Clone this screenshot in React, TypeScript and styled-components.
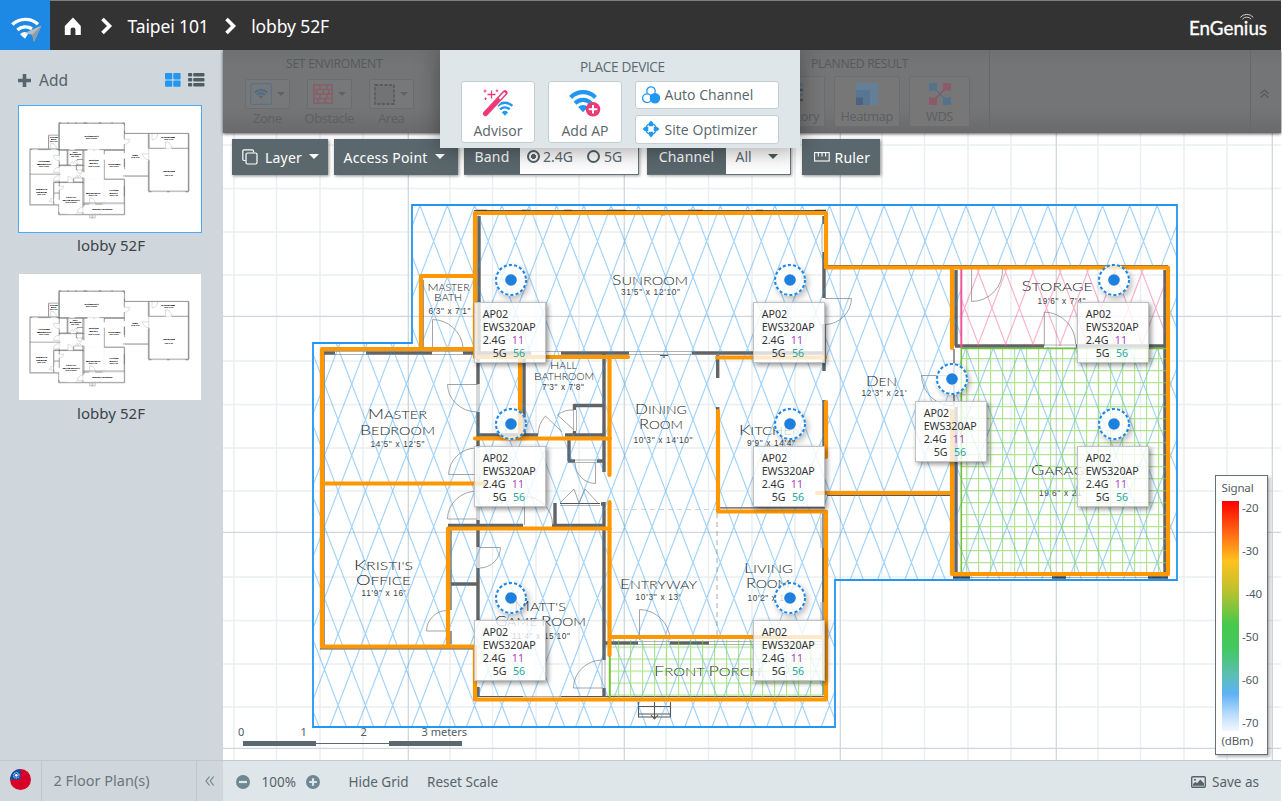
import React from 'react';
import styled, { createGlobalStyle } from 'styled-components';

const UI = "'Noto Sans', 'Open Sans', sans-serif";
const NARROW = "'Open Sans', 'Noto Sans', sans-serif";

const Global = createGlobalStyle`
  * { box-sizing: border-box; }
  html, body, #root { margin: 0; padding: 0; }
  body { background: #fff; font-family: ${UI}; overflow: hidden; }
  svg { display: block; }
`;

/* ---------- shell ---------- */

const Shell = styled.div`
  width: 1282px;
  height: 802px;
  display: flex;
  flex-direction: column;
  overflow: hidden;
  background: #fff;
`;
const Header = styled.header`
  position: relative;
  z-index: 5;
  flex: none;
  width: 1281px;
  height: 50px;
  display: flex;
  align-items: center;
  background: #333;
  border-top: 1px solid #7b7e7f;
`;
const LogoTile = styled.div`
  width: 50px;
  height: 50px;
  margin-top: -1px;
  background: #1e88e5;
`;
const Crumbs = styled.nav`
  display: flex;
  align-items: center;
  padding-left: 14px;
  color: #fff;
`;
const HomeLink = styled.span`
  margin-right: 18.5px;
`;
const Crumb = styled.span<{ $ml: number; $mr?: number }>`
  font-size: 17.5px;
  line-height: 24px;
  white-space: nowrap;
  letter-spacing: -0.12px;
  margin-left: ${(p) => p.$ml}px;
  margin-right: ${(p) => p.$mr ?? 0}px;
`;
const Brand = styled.div`
  margin-left: auto;
  margin-right: 12px;
`;
const Body = styled.div`
  flex: none;
  display: flex;
  width: 1281px;
  height: 751px;
`;

/* ---------- sidebar ---------- */

const Sidebar = styled.aside`
  flex: none;
  width: 223px;
  display: flex;
  flex-direction: column;
  background: #cfd7dd;
`;
const SideTools = styled.div`
  display: flex;
  align-items: center;
  height: 55px;
  padding: 5px 18px 0 18px;
`;
const AddLabel = styled.span`
  margin-left: 8px;
  font-size: 15.5px;
  color: #566167;
`;
const ViewIcons = styled.div`
  margin-left: auto;
  display: flex;
  gap: 7.5px;
`;
const Thumb = styled.div<{ $active?: boolean }>`
  flex: none;
  width: 184px;
  height: 128px;
  margin-left: 18px;
  background: #fff;
  border: ${(p) => (p.$active ? '1.5px solid #4ea9f5' : '1.5px solid #cfd7dd')};
`;
const ThumbLabel = styled.div`
  width: 222px;
  height: 39.5px;
  line-height: 24px;
  font-size: 15px;
  letter-spacing: 0.05px;
  text-align: center;
  color: #3b4347;
`;
const SideFooter = styled.div`
  margin-top: auto;
  height: 41px;
  display: flex;
  border-top: 1.5px solid #bfc9cd;
`;
const SideCell = styled.div<{ $w: number; $last?: boolean }>`
  width: ${(p) => p.$w}px;
  display: flex;
  align-items: center;
  justify-content: center;
  border-right: ${(p) => (p.$last ? 'none' : '1.5px solid #bdc7cc')};
`;
const PlanCount = styled.span`
  width: 131px;
  padding-bottom: 2px;
  font-size: 14.5px;
  letter-spacing: 0.02px;
  color: #6a777c;
`;

/* ---------- ribbon ---------- */

const Main = styled.main`
  flex: 1;
  display: flex;
  flex-direction: column;
  min-width: 0;
`;
const Ribbon = styled.section`
  position: relative;
  z-index: 3;
  flex: none;
  height: 83px;
  display: flex;
  background: linear-gradient(#6f7072, #747577 20%, #747577 70%, #6a6a6c 100%);
  box-shadow: 0 1px 3px rgba(0, 0, 0, 0.65);
`;
const RibbonGroup = styled.div<{ $w: number; $line?: boolean }>`
  width: ${(p) => p.$w}px;
  border-right: ${(p) => (p.$line ? '1px solid #66686a' : 'none')};
`;
const GroupTitle = styled.div<{ $pl: number }>`
  height: 26px;
  padding-left: ${(p) => p.$pl}px;
  padding-top: 4px;
  font-family: ${NARROW};
  font-size: 12.2px;
  letter-spacing: -0.3px;
  line-height: 19px;
  color: #555a5c;
  white-space: nowrap;
`;
const EnvRow = styled.div`
  display: flex;
  gap: 16.5px;
  padding: 3px 0 0 21.5px;
`;
const EnvItem = styled.div`
  width: 45.5px;
  display: flex;
  flex-direction: column;
  align-items: center;
`;
const EnvButton = styled.div`
  width: 45.5px;
  height: 30px;
  display: flex;
  align-items: center;
  justify-content: center;
  gap: 5px;
  border: 1px solid #6c6d6f;
  border-radius: 2px;
  background: #777879;
`;
const DimLabel = styled.div`
  font-family: ${NARROW};
  font-size: 12.8px;
  letter-spacing: -0.35px;
  line-height: 18px;
  white-space: nowrap;
  color: #5b5f61;
`;
const ResultRow = styled.div`
  display: flex;
  gap: 9.5px;
  margin-left: -40px;
`;
const ResultButton = styled.div<{ $w: number }>`
  width: ${(p) => p.$w}px;
  height: 50.5px;
  display: flex;
  flex-direction: column;
  align-items: center;
  padding-top: 6px;
  gap: 2px;
  border: 1px solid #6c6d6f;
  border-radius: 2px;
  background: #777778;
`;
const Collapse = styled.div`
  margin-left: auto;
  width: 31px;
  display: flex;
  align-items: center;
  justify-content: center;
  padding-right: 4px;
  padding-top: 4px;
  border-left: 1px solid #66686a;
`;

/* ---------- place device panel ---------- */

const PlacePanel = styled.div`
  position: relative;
  z-index: 2;
  width: 360px;
  height: 98px;
  background: #dfe6e9;
  box-shadow: 0 2px 22px rgba(0, 0, 0, 0.38);
`;
const PlaceTitle = styled.div`
  height: 30.5px;
  padding: 7px 0 0 140px;
  font-family: ${NARROW};
  font-size: 13.6px;
  letter-spacing: -0.35px;
  line-height: 19px;
  color: #5d696e;
`;
const PlaceRow = styled.div`
  display: flex;
  padding-left: 21px;
  gap: 13px;
`;
const BigButton = styled.div`
  width: 74px;
  height: 62.5px;
  display: flex;
  flex-direction: column;
  align-items: center;
  justify-content: space-between;
  padding: 7px 0 2px;
  border: 1.5px solid #c3ced4;
  border-radius: 3px;
  background: #fff;
`;
const ButtonText = styled.span`
  font-family: ${NARROW};
  font-size: 14px;
  font-weight: 500;
  letter-spacing: 0.05px;
  line-height: 19px;
  color: #58656a;
  white-space: nowrap;
`;
const SmallStack = styled.div`
  display: flex;
  flex-direction: column;
  gap: 6px;
`;
const SmallButton = styled.div`
  width: 143.5px;
  height: 28.5px;
  display: flex;
  align-items: center;
  gap: 5px;
  padding: 0 0 0 5.5px;
  border: 1.5px solid #c3ced4;
  border-radius: 3px;
  background: #fff;
`;

/* ---------- canvas ---------- */

const Canvas = styled.section`
  position: relative;
  flex: 1;
  overflow: hidden;
  background: #fff;
`;
const MapTools = styled.div`
  position: absolute;
  left: 9px;
  top: 5.5px;
  display: flex;
`;
const Tool = styled.div<{ $w: number; $mr: number; $pl: number; $gap: number }>`
  width: ${(p) => p.$w}px;
  height: 36px;
  margin-right: ${(p) => p.$mr}px;
  padding-left: ${(p) => p.$pl}px;
  display: flex;
  align-items: center;
  gap: ${(p) => p.$gap}px;
  background: #5a686e;
  box-shadow: 1px 1px 3px rgba(0, 0, 0, 0.45);
`;
const ToolText = styled.span`
  font-size: 14px;
  line-height: 20px;
  padding-top: 2px;
  letter-spacing: 0.2px;
  color: #fff;
  white-space: nowrap;
`;
const Field = styled.div<{ $w: number; $mr: number }>`
  width: ${(p) => p.$w}px;
  height: 36px;
  margin-right: ${(p) => p.$mr}px;
  display: flex;
  background: #fff;
  border-right: 1.5px solid #66747a;
  border-bottom: 1.5px solid #66747a;
  box-shadow: 1px 1px 3px rgba(0, 0, 0, 0.35);
`;
const FieldName = styled.div<{ $w: number }>`
  width: ${(p) => p.$w}px;
  display: flex;
  align-items: center;
  justify-content: center;
  background: #5a686e;
`;
const FieldValue = styled.div`
  flex: 1;
  display: flex;
  align-items: center;
  padding-left: 6.5px;
  color: #5c6a70;
`;
const Radio = styled.i<{ $on?: boolean }>`
  width: 13px;
  height: 13px;
  border-radius: 50%;
  border: 2.2px solid #55636a;
  background: ${(p) => (p.$on ? 'radial-gradient(#55636a 2.2px, #fff 2.8px)' : '#fff')};
`;
const ValueText = styled.span<{ $ml: number; $mr: number }>`
  margin-left: ${(p) => p.$ml}px;
  margin-right: ${(p) => p.$mr}px;
  padding-top: 2px;
  font-size: 14px;
  letter-spacing: 0;
  line-height: 20px;
`;
const Pin = styled.div`
  position: absolute;
  width: 32px;
  height: 32px;
  border-radius: 50%;
  background: rgba(255, 255, 255, 0.75);
  box-shadow: 2px 3px 6px rgba(0, 0, 0, 0.28);
`;
const Tag = styled.div`
  position: absolute;
  left: -20.5px;
  top: 38px;
  width: 72px;
  height: 61px;
  padding: 4.5px 0 0 7.5px;
  border: 1px solid #bfc3c6;
  background: rgba(255, 255, 255, 0.78);
  box-shadow: 2px 2px 5px rgba(0, 0, 0, 0.45);
  font-size: 10.7px;
  line-height: 13px;
  letter-spacing: -0.05px;
  color: #333;
  white-space: nowrap;
`;
const TagLine = styled.div<{ $indent?: boolean }>`
  padding-left: ${(p) => (p.$indent ? 10 : 0)}px;
`;
const Chan = styled.span<{ $c: string }>`
  margin-left: 6.5px;
  color: ${(p) => p.$c};
`;
const Scale = styled.div`
  position: absolute;
  left: 15px;
  top: 592px;
  width: 240px;
`;
const ScaleLabels = styled.div`
  display: grid;
  grid-template-columns: 62.5px 60px 61px auto;
  font-size: 11px;
  line-height: 14px;
  color: #4f5c62;
`;
const ScaleBar = styled.div`
  display: flex;
  align-items: center;
  margin: 1.5px 0 0 4.5px;
`;
const Segment = styled.i<{ $thin?: boolean }>`
  width: 73.3px;
  height: ${(p) => (p.$thin ? 1 : 5)}px;
  background: #5b696f;
`;
const Legend = styled.div`
  position: absolute;
  left: 992px;
  top: 342px;
  width: 53px;
  height: 280px;
  padding: 3px 0 0 5.5px;
  background: #fff;
  border: 1.5px solid #647177;
  box-shadow: 2px 2px 3px rgba(0, 0, 0, 0.3);
  font-size: 11.5px;
  line-height: 18px;
  letter-spacing: -0.15px;
  color: #4f5c62;
`;
const LegendBody = styled.div`
  display: flex;
  margin-top: 3.5px;
`;
const Gradient = styled.div`
  width: 17px;
  height: 230px;
  background: linear-gradient(#ff0000, #ff5a12 12%, #ffc21e 26%, #c3c02d 38%, #45c94c 54%, #45c761 64%, #5abfae 75%, #60b2f6 84%, #bcddfb 93%, #f2f8fe);
`;
const Ticks = styled.div`
  display: flex;
  flex-direction: column;
  gap: 25px;
  margin: -1.5px 0 0 3.5px;
`;
const Tick = styled.span<{ $shift?: boolean }>`
  line-height: 18px;
  padding-left: ${(p) => (p.$shift ? 3.5 : 0)}px;
`;
const Footer = styled.footer`
  flex: none;
  height: 41px;
  display: flex;
  align-items: center;
  padding: 2px 22px 0 13px;
  background: #dee6e9;
  border-top: 1.5px solid #bfcbd0;
`;
const FootText = styled.span<{ $ml: number; $mr?: number }>`
  font-size: 13.5px;
  letter-spacing: 0;
  color: #56646a;
  white-space: nowrap;
  margin-left: ${(p) => p.$ml}px;
  margin-right: ${(p) => p.$mr ?? 0}px;
`;
const FootRight = styled.div`
  margin-left: auto;
  display: flex;
  align-items: center;
`;

/* ---------- icons ---------- */

const Caret = ({ color, w = 10 }: { color: string; w?: number }) => (
  <svg width={w} height={w / 2} viewBox="0 0 10 5"><path d="M0 0H10L5 5Z" fill={color} /></svg>
);

const CrumbArrow = () => (
  <svg width="12" height="18" viewBox="0 0 12 18" fill="none" stroke="#fff" strokeWidth="3.6">
    <path d="M1.5 2L8.5 9L1.5 16" />
  </svg>
);

const AppLogo = () => (
  <svg width="50" height="50" viewBox="0 0 50 50" fill="none" stroke="#fff" strokeWidth="3.4">
    <path d="M12.3 24.6A19 19 0 0 1 38 24.2M17.3 30A12.5 12.5 0 0 1 32 28.8" />
    <path d="M25 38.8L20 34.3A7.5 7.5 0 0 1 28.5 33Z" fill="#fff" stroke="none" />
    <path d="M41.5 25.5L34 42L32.2 34.8L24.5 33Z" fill="#b4bcc2" stroke="none" />
    <path d="M41.5 25.5L34 42L32.2 34.8Z" fill="#8e9ba4" stroke="none" />
  </svg>
);

const BrandMark = () => (
  <svg width="80" height="30" viewBox="0 0 80 30">
    <text x="0" y="24" fill="#fff" fontFamily="Lato, sans-serif" fontSize="19.5" fontWeight="400" stroke="#fff" strokeWidth="0.35" textLength="78" lengthAdjust="spacingAndGlyphs">EnGenius</text>
    <g fill="none" stroke="#dcdcdc" strokeWidth="0.9">
      <path d="M51.3 6.4A8.5 8.5 0 0 1 64.3 6.4M53.4 8.2A5.7 5.7 0 0 1 62.2 8.2" />
    </g>
  </svg>
);

/* ---------- floor plan ---------- */

type Seg = [number, number, number, number];

const ORANGE =
  'M475 357V213H826V267.5H1168V574H952V411M475 276H421V349M475 349H322V646.5H475V699.5H826V511.5H718V411' +
  'M475 357H628M717 357.5H825M520 357V437M475 438.5H610M609.5 357V475M609.5 502V655M322 483.5H485' +
  'M448 646V528.5H610M609.5 637H826M826 402V457M817 493H952M952 268V348';

const WALLS: Seg[] = [
  [479, 216, 479, 356], [824, 216, 824, 224], [824, 252, 824, 298], [824, 324, 824, 371], [824, 400, 824, 446],
  [324, 353, 335, 353], [366, 353, 432, 353], [463, 353, 531, 353], [561, 353, 629, 353], [692, 353, 823, 353],
  [717.7, 355, 717.7, 378], [717.7, 407, 717.7, 411], [604, 354, 604, 472], [604, 502, 604, 660], [604, 688, 604, 697],
  [574, 405.5, 604, 405.5], [574.5, 404, 574.5, 410], [574.5, 431, 574.5, 436], [477, 435, 538, 435], [565, 435, 604, 435],
  [569, 437, 569, 461], [568, 461, 575, 461], [597, 461, 604, 461], [524, 358, 524, 435],
  [478, 357, 478, 384], [478, 412, 478, 448], [478, 520, 478, 547], [478, 568, 478, 620], [478, 687, 478, 697],
  [448, 525.5, 523, 525.5], [552, 525.5, 604, 525.5], [555, 503, 555, 526], [601, 504, 604, 504],
  [451, 584, 478, 584], [605, 643, 638, 643], [670, 643, 709, 643],
  [956, 270, 956, 346], [956, 407, 956, 573], [955, 346, 1044, 346], [1076, 346, 1166, 346], [1165, 270, 1165, 573],
  [824, 548, 824, 602],
];

const THIN: Seg[] = [
  [474, 210.5, 826, 210.5], [826, 265.5, 1168, 265.5], [451, 530, 451, 610], [451, 631, 451, 644], [320, 648.8, 475, 648.8],
  [478, 696.5, 523, 696.5], [561, 696.5, 825, 696.5], [720, 507.8, 825, 507.8], [823, 513, 823, 695], [954, 349, 954, 406],
  [560, 503.5, 600, 503.5], [324, 354, 324, 646], [827, 495.3, 952, 495.3], [423, 280, 423, 348],
];

const BLOCKS: Seg[] = [
  [476, 211, 487, 211], [522, 211, 530, 211], [564, 211, 572, 211], [607, 211, 626, 211], [688, 211, 703, 211],
  [756, 211, 763, 211], [815, 211, 826, 211], [953, 577.5, 970, 577.5], [1052, 577.5, 1066, 577.5], [1148, 577.5, 1168, 577.5],
];

const WINDOWS: Seg[] = [
  [335, 351.5, 366, 351.5], [335, 354.5, 366, 354.5], [432, 354.5, 463, 354.5], [432, 351.5, 463, 351.5],
  [531, 351.5, 561, 351.5], [629, 351.5, 692, 351.5], [629, 354.5, 692, 354.5], [822, 224, 822, 252], [825, 224, 825, 252],
  [573.5, 410, 573.5, 431], [576.5, 410, 576.5, 431], [575, 460, 597, 460], [575, 462.5, 597, 462.5],
  [477, 384, 477, 412], [479, 384, 479, 412], [477, 448, 477, 520], [479, 448, 479, 520], [477, 547, 477, 568], [479, 547, 479, 568],
  [523, 696.5, 561, 696.5], [638, 641.5, 670, 641.5], [638, 644.5, 670, 644.5], [709, 641.5, 823, 641.5], [709, 644.5, 823, 644.5],
  [602, 660, 602, 688], [605, 660, 605, 688], [821, 517, 821, 548], [821, 602, 821, 640], [970, 577.5, 1148, 577.5],
  [1044, 345, 1076, 345], [1044, 348, 1076, 348], [560, 505.5, 600, 505.5],
];

const DOORS =
  'M825 298.5H851.5A27 27 0 0 1 826 324.5M432.5 352V319.5A31 31 0 0 1 463 347M478 384.5H447.5A30 28 0 0 0 477 412' +
  'M477 474.5H448.5A28 28 0 0 1 475 448M477 519H447.5A30 28 0 0 1 478 491M524.5 525V496.5A28 28 0 0 1 552.5 525' +
  'M479 547.5H500.5A21 21 0 0 1 480 568M448 631H426.5A21 21 0 0 1 446 610.5M603 688H573.5A29 28 0 0 1 602 660' +
  'M639.5 640V609.5A31 31 0 0 1 670 640M538 435A28 28 0 0 1 545.5 416L562 432M573 434V436M557.5 415A24 24 0 0 1 574 410M557.5 415L574 430' +
  'M595.5 463V483.5A21 21 0 0 1 575 463M560 503L574 489L579 503L585 489L598 503' +
  'M971.6 269V301.5A31 31 0 0 0 1002.5 269M1044.3 346V312A32 32 0 0 1 1075.6 344M953 375.5H921.5A32 31 0 0 0 954 406';

type Label = { t: string; x: number; w: number; y: number; k?: 's' | 'd' };

const LABELS: Label[] = [
  { t: 'Sunroom', x: 612, w: 76, y: 284.5 }, { t: '31\'5" x 12\'10"', x: 621, w: 59, y: 295, k: 'd' },
  { t: 'Master', x: 427.5, w: 42, y: 290.5, k: 's' }, { t: 'Bath', x: 434, w: 28, y: 301, k: 's' }, { t: '6\'3" x 7\'1"', x: 428.5, w: 42, y: 313.5, k: 'd' },
  { t: 'Master', x: 368, w: 59, y: 418.5 }, { t: 'Bedroom', x: 360, w: 75, y: 434.5 }, { t: '14\'5" x 12\'5"', x: 370.5, w: 54, y: 447, k: 'd' },
  { t: 'Hall', x: 550, w: 27, y: 369, k: 's' }, { t: 'Bathroom', x: 534, w: 60, y: 380, k: 's' }, { t: '7\'3" x 7\'8"', x: 542, w: 42, y: 390, k: 'd' },
  { t: 'Dining', x: 635, w: 52, y: 413.5 }, { t: 'Room', x: 639, w: 44, y: 429 }, { t: '10\'3" x 14\'10"', x: 633.5, w: 59, y: 443, k: 'd' },
  { t: 'Kitchen', x: 739, w: 64, y: 435 }, { t: '9\'9" x 14\'4"', x: 747, w: 48, y: 445.5, k: 'd' },
  { t: 'Den', x: 866, w: 31, y: 386 }, { t: '12\'3" x 21\'', x: 861.5, w: 45, y: 395.5, k: 'd' },
  { t: 'Storage', x: 1021.5, w: 71, y: 290.5 }, { t: '19\'6" x 7\'4"', x: 1037.5, w: 48, y: 303.5, k: 'd' },
  { t: 'Garage', x: 1031, w: 62, y: 474.5 }, { t: '19\'6" x 21\'', x: 1039, w: 45, y: 496, k: 'd' },
  { t: "Kristi's", x: 354, w: 59, y: 569.5 }, { t: 'Office', x: 356, w: 55, y: 585 }, { t: '11\'9" x 16\'', x: 361.5, w: 44, y: 596, k: 'd' },
  { t: "Matt's", x: 514, w: 52, y: 610.5 }, { t: 'Game Room', x: 495, w: 91, y: 625.5 }, { t: '11\'4" x 15\'10"', x: 512, w: 58, y: 639, k: 'd' },
  { t: 'Entryway', x: 620, w: 77, y: 588.5 }, { t: '10\'3" x 13\'', x: 635.5, w: 45, y: 600, k: 'd' },
  { t: 'Living', x: 744, w: 49, y: 572.5 }, { t: 'Room', x: 746, w: 44, y: 588 }, { t: '10\'2" x 13\'', x: 747.5, w: 44, y: 601, k: 'd' },
  { t: 'Front Porch', x: 654, w: 107, y: 676 },
];

const RoomLabel = ({ t, x, w, y, k, heavy }: Label & { heavy?: boolean }) => {
  if (k === 'd') {
    return (
      <text x={x} y={y} textLength={w} fontFamily="'Liberation Sans', sans-serif" fontSize="8.3" fill="#3c3c3c" stroke="#3c3c3c" strokeWidth={heavy ? 0.8 : 0}>
        {t}
      </text>
    );
  }
  const big = k === 's' ? 10.5 : 13.5;
  const small = k === 's' ? 9 : 11.2;
  return (
    <text
      x={x} y={y} textLength={w} lengthAdjust="spacingAndGlyphs" fontFamily="Lato, sans-serif" fontWeight="300"
      fill="#1c1c1c" stroke="#1c1c1c" strokeWidth={heavy ? 1 : 0}
    >
      {t.split(/(?<= )/).map((word, i) => (
        <React.Fragment key={i}>
          <tspan fontSize={big}>{word[0]}</tspan>
          <tspan fontSize={small}>{word.slice(1).toUpperCase()}</tspan>
        </React.Fragment>
      ))}
    </text>
  );
};

const Lines = ({ segs, color, w }: { segs: Seg[]; color: string; w: number }) => (
  <path d={segs.map((s) => `M${s[0]} ${s[1]}L${s[2]} ${s[3]}`).join('')} stroke={color} strokeWidth={w} fill="none" />
);

const PlanDrawing = ({ heavy }: { heavy?: boolean }) => (
  <g>
    <Lines segs={THIN} color="#555" w={1.2} />
    <Lines segs={WINDOWS} color="#9a9fa2" w={0.8} />
    <Lines segs={WALLS} color="#616365" w={3.4} />
    <Lines segs={BLOCKS} color="#3f4143" w={2.6} />
    <path d={DOORS} fill="none" stroke="#8d8d8d" strokeWidth={heavy ? 1.6 : 0.8} />
    <path d="M717 513V637" stroke="#aaa" strokeDasharray="5 4" strokeWidth="1" />
    <path d="M605 509.5H717" stroke="#ccc" strokeDasharray="5 4" strokeWidth="0.8" />
    <path d="M638.5 702V717H670.5V702M638.5 706.5H670.5M638.5 714H670.5M654.5 702V718M651 715L654.5 719L658 715M661 214.8H665M660 355.5H668M664 355V358" fill="none" stroke="#555" strokeWidth="1.1" />
    {LABELS.map((l, i) => <RoomLabel key={i} {...l} heavy={heavy} />)}
  </g>
);

/* Two crossing families of slanted lines; `h` is the height of one full diamond. */
const lattice = (x0: number, y0: number, w: number, h: number, left: number, right: number, top: number, bottom: number) => {
  const run = ((bottom - top) * w) / h;
  const shift = (((top - y0) * w) / h) % w;
  let d = '';
  for (let x = x0 - Math.ceil((x0 - left + run) / w + 1) * w; x < right + run + w; x += w) {
    d += `M${(x + shift).toFixed(2)} ${top}l${run.toFixed(2)} ${bottom - top}M${(x - shift).toFixed(2)} ${top}l${(-run).toFixed(2)} ${bottom - top}`;
  }
  return d;
};

const grid = (majors: number[], offsets: number[]) => majors.flatMap((m) => offsets.map((o) => m + o));
const V_MAJOR = [192, 408, 624, 840, 1056, 1272];
const H_MAJOR = [100, 316, 532, 748];
const ZONE = 'M412 205H1177V580H835V727H313V343H412Z';

const FloorMap = () => (
  <svg width="1059" height="627" viewBox="223 133 1059 627">
    <defs>
      <clipPath id="zoneClip"><path d={ZONE + 'M961 269V347H1165V269Z'} clipRule="evenodd" /></clipPath>
      <clipPath id="storeClip"><rect x="961" y="269" width="204" height="77" /></clipPath>
      <pattern id="turfA" patternUnits="userSpaceOnUse" x="978" y="358" width="12" height="12">
        <path d="M0 .6H12M.6 0V12" stroke="#7ed348" strokeOpacity="0.6" strokeWidth="1.2" />
      </pattern>
      <pattern id="turfB" patternUnits="userSpaceOnUse" x="618" y="646.5" width="12" height="12">
        <path d="M0 .6H12M.6 0V12" stroke="#7ed348" strokeOpacity="0.6" strokeWidth="1.2" />
      </pattern>
    </defs>
    <path
      d={grid(V_MAJOR, [42, 84.5, 128, 171]).map((x) => `M${x} 133V760`).join('') + grid(H_MAJOR, [45, 88.5, 132, 175]).map((y) => `M223 ${y}H1282`).join('')}
      stroke="#eceff1" strokeWidth="1.5"
    />
    <path
      d={V_MAJOR.map((x) => `M${x + 0.3} 133V760`).join('') + H_MAJOR.map((y) => `M223 ${y + 0.3}H1282`).join('')}
      stroke="#cdd7dc" strokeWidth="1.3"
    />
    <PlanDrawing />
    <g clipPath="url(#zoneClip)">
      <path d={lattice(420, 205.5, 27.3, 71.4, 313, 1177, 205.5, 727)} stroke="#2196f3" strokeOpacity="0.42" strokeWidth="1.15" fill="none" />
    </g>
    <g clipPath="url(#storeClip)">
      <path d={lattice(978.3, 272, 27.3, 72, 961, 1165, 269, 347)} stroke="#f0558c" strokeOpacity="0.45" strokeWidth="1.15" fill="none" />
    </g>
    <rect x="961" y="348" width="205" height="225" fill="url(#turfA)" />
    <rect x="610" y="640" width="215" height="58" fill="url(#turfB)" />
    <path d="M961.3 269V348" stroke="#f0559a" strokeWidth="2" />
    <path d="M961.3 573V348.5H1166" stroke="#72c235" strokeWidth="1.6" fill="none" />
    <path d="M609.8 655V698" stroke="#72c235" strokeWidth="2" />
    <path d={ZONE} fill="none" stroke="#2196f3" strokeWidth="1.8" />
    <path d={ORANGE} fill="none" stroke="#ff9800" strokeWidth="4.2" strokeLinecap="round" strokeLinejoin="round" />
  </svg>
);

const PlanThumb = () => (
  <svg width="181" height="125" viewBox="264 121 963 665">
    <path d={ORANGE} fill="none" stroke="#8a8c8e" strokeWidth="4" />
    <PlanDrawing heavy />
  </svg>
);

const PINS: [number, number][] = [
  [511, 280], [790, 280], [1114, 280], [511, 424], [790, 424], [1114, 424], [952, 379], [511, 598], [790, 598],
];

const AccessPoint = ({ x, y }: { x: number; y: number }) => (
  <Pin style={{ left: x - 223 - 16.3, top: y - 133 - 16 }}>
    <svg width="32" height="32" viewBox="0 0 32 32">
      <circle cx="16" cy="16" r="15" fill="none" stroke="#1e88e5" strokeWidth="2.1" strokeDasharray="3.1 2.136" />
      <circle cx="16" cy="16" r="5.8" fill="#1e7fdd" />
    </svg>
    <Tag>
      <TagLine>AP02</TagLine>
      <TagLine>EWS320AP</TagLine>
      <TagLine>2.4G<Chan $c="#ab47bc">11</Chan></TagLine>
      <TagLine $indent>5G<Chan $c="#26a69a">56</Chan></TagLine>
    </Tag>
  </Pin>
);

/* ---------- page ---------- */

export default function App() {
  return (
    <Shell>
      <Global />
      <Header>
        <LogoTile><AppLogo /></LogoTile>
        <Crumbs>
          <HomeLink>
            <svg width="18" height="18" viewBox="0 0 18 18"><path d="M9 0.5L0.8 9V18H6.6V12.2Q6.6 10.4 9 10.4T11.4 12.2V18H16.8V9Z" fill="#fff" /></svg>
          </HomeLink>
          <CrumbArrow />
          <Crumb $ml={15} $mr={16}>Taipei 101</Crumb>
          <CrumbArrow />
          <Crumb $ml={14.5}>lobby 52F</Crumb>
        </Crumbs>
        <Brand><BrandMark /></Brand>
      </Header>
      <Body>
        <Sidebar>
          <SideTools>
            <svg width="13" height="13" viewBox="0 0 13 13"><path d="M6.5 0V13M0 6.5H13" stroke="#56666d" strokeWidth="3.6" /></svg>
            <AddLabel>Add</AddLabel>
            <ViewIcons>
              <svg width="16" height="14" viewBox="0 0 16 14" fill="#2196f3">
                <rect width="7.3" height="6.4" rx="1" /><rect x="8.3" width="7.3" height="6.4" rx="1" />
                <rect y="7.4" width="7.3" height="6.4" rx="1" /><rect x="8.3" y="7.4" width="7.3" height="6.4" rx="1" />
              </svg>
              <svg width="17" height="14" viewBox="0 0 17 14" fill="#4e5d64">
                {[0, 5, 10].map((y) => (
                  <g key={y}><rect y={y} width="4.2" height="3.4" rx="1" /><rect x="5.2" y={y} width="11.3" height="3.4" rx="1" /></g>
                ))}
              </svg>
            </ViewIcons>
          </SideTools>
          <Thumb $active><PlanThumb /></Thumb>
          <ThumbLabel>lobby 52F</ThumbLabel>
          <Thumb><PlanThumb /></Thumb>
          <ThumbLabel>lobby 52F</ThumbLabel>
          <SideFooter>
            <SideCell $w={42}>
              <svg width="21" height="21" viewBox="0 0 20 20" style={{ marginTop: -3 }}>
                <clipPath id="round"><circle cx="10" cy="10" r="10" /></clipPath>
                <g clipPath="url(#round)">
                  <rect width="20" height="20" fill="#d80027" /><rect width="10" height="10" fill="#0052b4" />
                  <circle cx="6" cy="6" r="2.6" fill="none" stroke="#c8d8f0" strokeWidth="1" strokeDasharray="1 .6" /><circle cx="6" cy="6" r="1.3" fill="#fff" />
                </g>
              </svg>
            </SideCell>
            <SideCell $w={155}><PlanCount>2 Floor Plan(s)</PlanCount></SideCell>
            <SideCell $w={26} $last>
              <svg width="10" height="10" viewBox="0 0 10 10" fill="none" stroke="#6f8590" strokeWidth="1.2"><path d="M4.5 .5L1 5L4.5 9.5M8.7 .5L5.2 5L8.7 9.5" /></svg>
            </SideCell>
          </SideFooter>
        </Sidebar>
        <Main>
          <Ribbon>
            <RibbonGroup $w={217}>
              <GroupTitle $pl={63}>SET ENVIROMENT</GroupTitle>
              <EnvRow>
                <EnvItem>
                  <EnvButton>
                    <svg width="22" height="22" viewBox="0 0 22 22">
                      <rect x=".7" y=".7" width="20.6" height="20.6" rx="1.5" fill="none" stroke="#58728a" strokeWidth="1.2" />
                      <g transform="translate(4 5.5) scale(.58)"><g fill="none" stroke="#4d6b84" strokeWidth="3.2"><path d="M1.4 6.9A15 15 0 0 1 22.6 6.9M5.2 11A9.6 9.6 0 0 1 18.8 11" /><path d="M12 17.8L8.2 13.8A5.6 5.6 0 0 1 15.8 13.8Z" fill="#4d6b84" stroke="none" /></g></g>
                    </svg>
                    <Caret color="#606264" w={8} />
                  </EnvButton>
                  <DimLabel>Zone</DimLabel>
                </EnvItem>
                <EnvItem>
                  <EnvButton>
                    <svg width="20" height="20" viewBox="0 0 20 20" fill="none" stroke="#8a5c67" strokeWidth="1.4">
                      <rect x=".8" y=".8" width="18.4" height="18.4" /><path d="M1 5.4H19M1 10H19M1 14.6H19M7 1V5.4M14 1V5.4M4 5.4V10M10.5 5.4V10M16 5.4V10M7 10V14.6M14 10V14.6M5 14.6V19M12 14.6V19" />
                    </svg>
                    <Caret color="#606264" w={8} />
                  </EnvButton>
                  <DimLabel>Obstacle</DimLabel>
                </EnvItem>
                <EnvItem>
                  <EnvButton>
                    <svg width="21" height="21" viewBox="0 0 21 21"><rect x="1" y="1" width="19" height="19" fill="#727375" stroke="#505355" strokeWidth="1.3" strokeDasharray="3.2 1.5" /></svg>
                    <Caret color="#606264" w={8} />
                  </EnvButton>
                  <DimLabel>Area</DimLabel>
                </EnvItem>
              </EnvRow>
            </RibbonGroup>
            <PlacePanel>
              <PlaceTitle>PLACE DEVICE</PlaceTitle>
              <PlaceRow>
                <BigButton>
                  <svg width="32" height="28" viewBox="0 0 32 28">
                    <g transform="translate(14.5 12) scale(.7)" fill="none" stroke="#2196f3" strokeWidth="3.4">
                      <path d="M1.4 6.9A15 15 0 0 1 22.6 6.9M5.2 12A9.6 9.6 0 0 1 18.8 12" /><path d="M12 21L7.4 16.2A6 6 0 0 1 16.6 16.2Z" fill="#2196f3" stroke="none" />
                    </g>
                    <path d="M3.2 25L22.5 4.2" stroke="#fff" strokeWidth="7" />
                    <path d="M3.6 24.6L23 3.8" stroke="#ec3a76" strokeWidth="5.2" strokeLinecap="round" />
                    <path d="M17.5 9.7L23 3.8" stroke="#fff" strokeWidth="2.2" />
                    <path d="M9.5 1.5V9.5M5.5 5.5H13.5" stroke="#ec3a76" strokeWidth="1.3" />
                    <path d="M3 .5V3.5M1.5 2H4.5M15 .5V3M13.8 1.8H16.2M3.5 8.5V11M2.3 9.8H4.8" stroke="#ec3a76" strokeWidth="1" />
                  </svg>
                  <ButtonText>Advisor</ButtonText>
                </BigButton>
                <BigButton>
                  <svg width="32" height="28" viewBox="0 0 32 28">
                    <g transform="translate(0 1) scale(1.17 1.2)" fill="none" stroke="#2196f3" strokeWidth="3.6">
                      <path d="M1.4 6.2A15 15 0 0 1 22.6 6.2M5.2 11A9.6 9.6 0 0 1 18.8 11" /><path d="M12 18.5L7.8 14.2A5.8 5.8 0 0 1 16.2 14.2Z" fill="#2196f3" stroke="none" />
                    </g>
                    <circle cx="24" cy="20.3" r="7.3" fill="#ec3a76" />
                    <path d="M24 16V24.6M19.7 20.3H28.3" stroke="#fff" strokeWidth="2" />
                  </svg>
                  <ButtonText>Add AP</ButtonText>
                </BigButton>
                <SmallStack>
                  <SmallButton>
                    <svg width="18" height="18" viewBox="0 0 18 18" fill="#fff" stroke="#2196f3" strokeWidth="1.3">
                      <circle cx="9" cy="5" r="4.2" /><circle cx="5" cy="12.2" r="4.4" /><circle cx="13" cy="12.2" r="4.6" fill="#2196f3" />
                    </svg>
                    <ButtonText>Auto Channel</ButtonText>
                  </SmallButton>
                  <SmallButton>
                    <svg width="18" height="18" viewBox="0 0 18 18" fill="none" stroke="#2196f3">
                      <circle cx="9" cy="9" r="5.2" strokeWidth="1.5" />
                      <path d="M9 .5L11 2.8V6.3H7V2.8ZM9 17.5L11 15.2V11.7H7V15.2ZM.5 9L2.8 11H6.3V7H2.8ZM17.5 9L15.2 11H11.7V7H15.2Z" fill="#2196f3" stroke="none" />
                    </svg>
                    <ButtonText>Site Optimizer</ButtonText>
                  </SmallButton>
                </SmallStack>
              </PlaceRow>
            </PlacePanel>
            <RibbonGroup $w={190} $line>
              <GroupTitle $pl={11}>PLANNED RESULT</GroupTitle>
              <ResultRow>
                <ResultButton $w={64.5}>
                  <svg width="22" height="22" viewBox="0 0 22 22">
                    <path d="M0 2H22M0 12H22" stroke="#4f708c" strokeWidth="2.6" /><path d="M0 7H22M0 17H22" stroke="#4f5356" strokeWidth="2.6" />
                  </svg>
                  <DimLabel>Inventory</DimLabel>
                </ResultButton>
                <ResultButton $w={65.5}>
                  <svg width="22" height="22" viewBox="0 0 22 22">
                    <rect width="22" height="22" fill="#647f97" /><rect y="7" width="14" height="15" fill="#587692" /><rect y="14.5" width="7" height="7.5" fill="#4d6283" />
                  </svg>
                  <DimLabel>Heatmap</DimLabel>
                </ResultButton>
                <ResultButton $w={61}>
                  <svg width="22" height="22" viewBox="0 0 22 22">
                    <path d="M4 4L18 18" stroke="#55708a" strokeWidth="1.3" /><path d="M18 4L4 18" stroke="#855561" strokeWidth="1.3" />
                    <rect width="8" height="7.5" fill="#54728c" /><rect x="14" y="14.5" width="8" height="7.5" fill="#54728c" />
                    <rect x="14" width="8" height="7.5" fill="#8c5b69" /><rect y="14.5" width="8" height="7.5" fill="#8c5b69" />
                  </svg>
                  <DimLabel>WDS</DimLabel>
                </ResultButton>
              </ResultRow>
            </RibbonGroup>
            <Collapse>
              <svg width="9" height="9" viewBox="0 0 9 9" fill="none" stroke="#56595b" strokeWidth="1.1"><path d="M.5 4.5L4.5 1L8.5 4.5M.5 8.5L4.5 5L8.5 8.5" /></svg>
            </Collapse>
          </Ribbon>
          <Canvas>
            <FloorMap />
            {PINS.map(([x, y]) => <AccessPoint key={`${x}-${y}`} x={x} y={y} />)}
            <MapTools>
              <Tool $w={96} $mr={6} $pl={10} $gap={7}>
                <svg width="16" height="16" viewBox="0 0 16 16" fill="none" stroke="#fff" strokeWidth="1.2">
                  <rect x="4" y="4" width="11" height="11" rx="1.5" /><path d="M3.5 11.5H2Q.8 11.5 .8 10.3V2Q.8 .8 2 .8H10.2Q11.5 .8 11.5 2V3.5" />
                </svg>
                <ToolText>Layer</ToolText>
                <Caret color="#fff" />
              </Tool>
              <Tool $w={124} $mr={6} $pl={9.5} $gap={7}>
                <ToolText>Access Point</ToolText>
                <Caret color="#fff" />
              </Tool>
              <Field $w={175} $mr={8}>
                <FieldName $w={56}><ToolText>Band</ToolText></FieldName>
                <FieldValue>
                  <Radio $on /><ValueText $ml={3.5} $mr={14}>2.4G</ValueText>
                  <Radio /><ValueText $ml={4} $mr={0}>5G</ValueText>
                </FieldValue>
              </Field>
              <Field $w={144} $mr={11}>
                <FieldName $w={79}><ToolText>Channel</ToolText></FieldName>
                <FieldValue><ValueText $ml={3} $mr={16}>All</ValueText><Caret color="#4d5b61" /></FieldValue>
              </Field>
              <Tool $w={78} $mr={0} $pl={12} $gap={4.5}>
                <svg width="16" height="10" viewBox="0 0 16 10" fill="none" stroke="#fff" strokeWidth="1.1"><rect x=".6" y=".6" width="14.6" height="8.4" /><path d="M4.3 1V4.5M8 1V4.5M11.6 1V4.5" /></svg>
                <ToolText>Ruler</ToolText>
              </Tool>
            </MapTools>
            <Scale>
              <ScaleLabels><span>0</span><span>1</span><span>2</span><span>3 meters</span></ScaleLabels>
              <ScaleBar><Segment /><Segment $thin /><Segment /></ScaleBar>
            </Scale>
            <Legend>
              Signal
              <LegendBody>
                <Gradient />
                <Ticks>
                  <Tick>-20</Tick><Tick>-30</Tick><Tick $shift>-40</Tick><Tick>-50</Tick><Tick>-60</Tick><Tick>-70</Tick>
                </Ticks>
              </LegendBody>
              (dBm)
            </Legend>
          </Canvas>
          <Footer>
            <svg width="14" height="14" viewBox="0 0 14 14"><circle cx="7" cy="7" r="7" fill="#6f8792" /><path d="M3 7H11" stroke="#dee6e9" strokeWidth="2.2" /></svg>
            <FootText $ml={11.5} $mr={10}>100%</FootText>
            <svg width="14" height="14" viewBox="0 0 14 14"><circle cx="7" cy="7" r="7" fill="#6f8792" /><path d="M3.2 7H10.8M7 3.2V10.8" stroke="#dee6e9" strokeWidth="2.2" /></svg>
            <FootText $ml={28.5} $mr={18.5}>Hide Grid</FootText>
            <FootText $ml={0}>Reset Scale</FootText>
            <FootRight>
              <svg width="15" height="12" viewBox="0 0 15 12"><rect x=".7" y=".7" width="13.6" height="10.6" rx="1" fill="none" stroke="#56646a" strokeWidth="1.4" /><path d="M2 9.8V8L4.5 5.8L6 7.2L9.3 3.6L13 7.4V9.8Z" fill="#56646a" /><circle cx="4" cy="3.8" r="1" fill="#56646a" /></svg>
              <FootText $ml={6}>Save as</FootText>
            </FootRight>
          </Footer>
        </Main>
      </Body>
    </Shell>
  );
}
